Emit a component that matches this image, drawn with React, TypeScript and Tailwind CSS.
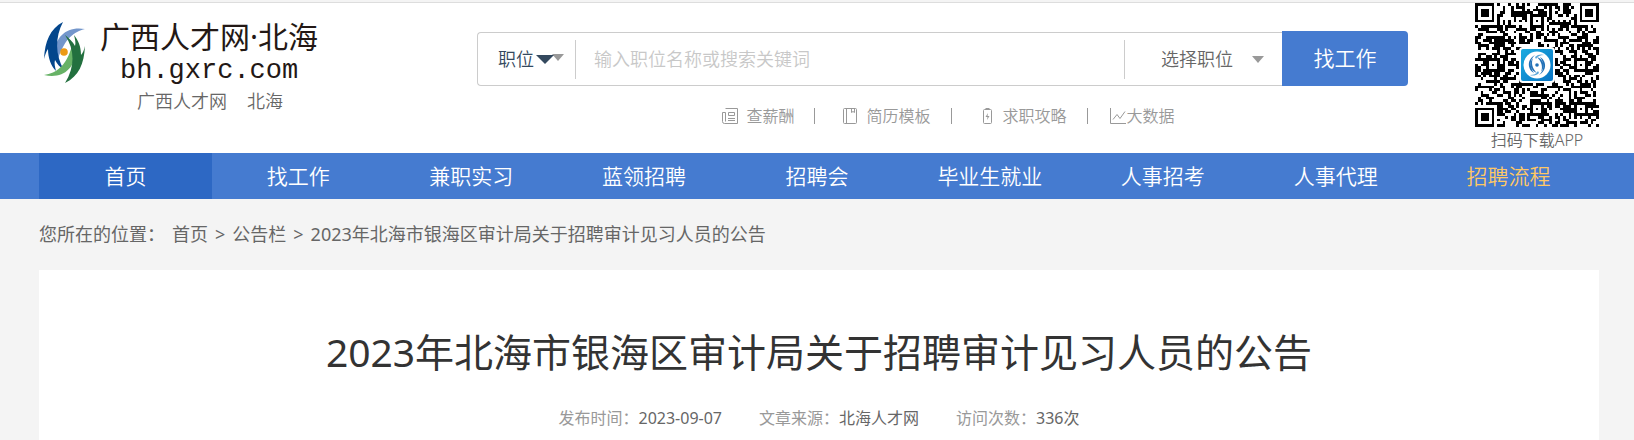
import type { ReactNode } from "react";

type QuickLink = {
  label: string;
  icon: ReactNode;
  tight?: boolean;
};

const navItems = [
  "首页",
  "找工作",
  "兼职实习",
  "蓝领招聘",
  "招聘会",
  "毕业生就业",
  "人事招考",
  "人事代理",
  "招聘流程",
];

const articleTitle = "2023年北海市银海区审计局关于招聘审计见习人员的公告";

const meta = [
  { label: "发布时间：", value: "2023-09-07" },
  { label: "文章来源：", value: "北海人才网" },
  { label: "访问次数：", value: "336次" },
];

const quickLinks: QuickLink[] = [
  {
    label: "查薪酬",
    icon: (
      <svg viewBox="0 0 16 18" className="h-[18px] w-4" fill="none" stroke="currentColor">
        <path d="M3.500 1.500h12v15h-13a2 2 0 0 1-2-2v-9h3v9" />
        <path d="M6.500 5.500h6v3h-6zM6 11.500h7M6 13.500h7" />
      </svg>
    ),
  },
  {
    label: "简历模板",
    icon: (
      <svg viewBox="0 0 16 18" className="h-[18px] w-4" fill="none" stroke="currentColor">
        <path d="M2.500 1.500h11a1 1 0 0 1 1 1v13a1 1 0 0 1-1 1h-11a1 1 0 0 1-1-1v-13a1 1 0 0 1 1-1zM4.500 1.500v15" />
        <path d="M9.500 1.500v4l1.500-1 1.500 1v-4" />
      </svg>
    ),
  },
  {
    label: "求职攻略",
    icon: (
      <svg viewBox="0 0 16 18" className="h-[18px] w-4" fill="none" stroke="currentColor">
        <path d="M5.500 2.500h6a1 1 0 0 1 1 1v12a1 1 0 0 1-1 1h-6a1 1 0 0 1-1-1v-12a1 1 0 0 1 1-1zM6.500 1.500h4" />
        <path d="M9 6 6.500 10H8.500L8 13 10.500 9H8.500z" fill="currentColor" stroke="none" />
      </svg>
    ),
  },
  {
    label: "大数据",
    tight: true,
    icon: (
      <svg viewBox="0 0 16 18" className="h-[18px] w-4" fill="none" stroke="currentColor">
        <path d="M.5 1v15.500h15.500" />
        <path d="m3 12.500 4-5 3 4 5-7" />
      </svg>
    ),
  },
];

const QR_SIZE = 45;
const ALIGNMENT = [6, 22, 38];

function ring(dx: number, dy: number) {
  return Math.max(Math.abs(dx), Math.abs(dy));
}

function isDark(x: number, y: number) {
  const finders = [
    [3, 3],
    [QR_SIZE - 4, 3],
    [3, QR_SIZE - 4],
  ];
  for (const [cx, cy] of finders) {
    const r = ring(x - cx, y - cy);
    if (r <= 4) return r <= 1 || r === 3;
  }
  for (const cx of ALIGNMENT) {
    for (const cy of ALIGNMENT) {
      const r = ring(x - cx, y - cy);
      if (r <= 2) return r !== 1;
    }
  }
  if (x === 6 || y === 6) return (x + y) % 2 === 0;
  const n = Math.sin(x * 12.9898 + y * 78.233) * 43758.5453;
  return n - Math.floor(n) < 0.52;
}

const qrPath = Array.from({ length: QR_SIZE * QR_SIZE }, (_, i) => [i % QR_SIZE, Math.floor(i / QR_SIZE)])
  .filter(([x, y]) => isDark(x, y))
  .map(([x, y]) => `M${x} ${y}h1v1h-1z`)
  .join("");

function QrCode() {
  return (
    <svg viewBox="0 0 124 124" className="block size-[124px]" role="img" aria-label="扫码下载APP">
      <defs>
        <linearGradient id="appTile" x1="0" y1="0" x2="1" y2="1">
          <stop offset="0" stopColor="#1cabdf" />
          <stop offset="1" stopColor="#0874c4" />
        </linearGradient>
      </defs>
      <path d={qrPath} transform="scale(2.7556)" shapeRendering="crispEdges" fill="#000" />
      <rect x="44" y="44" width="36" height="36" rx="4" fill="#fff" />
      <rect x="46" y="46" width="32" height="32" rx="2" fill="url(#appTile)" />
      <circle cx="62" cy="62" r="13.500" fill="#fff" />
      <g fill="#2372b8">
        <path d="M60 52c-5 4-6 11-1 18-6-3-8-13 1-18z" />
        <path d="M58 55c-2 5-1 10 4 15-6-2-9-9-4-15z" />
        <path d="M64 72c5-4 6-11 1-18 6 3 8 13-1 18z" />
        <path d="M66 69c2-5 1-10-4-15 6 2 9 9 4 15z" />
        <circle cx="62" cy="62" r="1.800" />
      </g>
      <path d="M60 54c3-3 7-3 9-2-4 0-6 1-8 4zM64 70c-3 3-7 3-9 2 4 0 6-1 8-4z" fill="#58a5d8" />
    </svg>
  );
}

function LogoMark() {
  return (
    <svg viewBox="0 0 44 64" className="h-16 w-11 shrink-0" aria-hidden="true">
      <path d="M11 32C13 15 24 5 42 8 31 11 22 17 15 38z" fill="#7396cb" />
      <path d="M20 1C7 8 2 20 1 38c1-4 2-7 4-10 0 9 3 17 8 22-1-4-2-8-1-11 2 4 5 7 9 10C12 34 12 16 20 1z" fill="#03468c" />
      <path d="M33 31C31 48 20 58 1 54 14 52 23 45 29 25z" fill="#67b266" />
      <path d="M22 62C36 55 41 43 42 25c-1 4-2 7-4 9 0-9-3-15-7-20 1 4 2 8 1 11-2-4-6-8-10-11 10 15 10 32 0 48z" fill="#23703f" />
      <circle cx="21" cy="31" r="3.800" fill="#ec9a14" />
    </svg>
  );
}

function Logo() {
  return (
    <div className="w-[438px] shrink-0 pt-4">
      <a href="#" className="flex items-center gap-[13px] pl-1 text-[#231815]">
        <LogoMark />
        <span className="flex flex-col font-normal">
          <span className="text-[30px] leading-9">广西人才网·北海</span>
          <span className="pl-5 font-['Liberation_Mono','Noto_Sans_CJK_SC',monospace] text-[27px] leading-8">
            bh.gxrc.com
          </span>
        </span>
      </a>
      <div className="flex gap-5 pl-[98px] text-lg leading-7 text-[#666]">
        <a href="#">广西人才网</a>
        <a href="#">北海</a>
      </div>
    </div>
  );
}

function SearchForm() {
  return (
    <form className="flex h-[55px]" onSubmit={(e) => e.preventDefault()}>
      <div className="mt-px flex min-w-0 flex-1 items-center rounded-l-[4px] border border-r-0 border-[#ccc] bg-white text-lg">
        <button type="button" className="flex h-[39px] w-[98px] items-center gap-0.5 border-r border-[#ccc] pl-5 text-[#34495e]">
          职位
          <svg viewBox="0 0 28 10" className="h-2.5 w-7" aria-hidden="true">
            <path d="M16 0h12l-6 7z" fill="#999" />
            <path d="M0 1h18l-9 9z" fill="#34495e" />
          </svg>
        </button>
        <input
          type="text"
          aria-label="关键词"
          placeholder="输入职位名称或搜索关键词"
          className="min-w-0 flex-1 px-[18px] text-[#666] outline-none placeholder:text-[#c8c8c8]"
        />
        <button type="button" className="flex h-[39px] w-[158px] items-center justify-between border-l border-[#ccc] pr-[18px] pl-9 text-[#666]">
          选择职位
          <svg viewBox="0 0 12 7" className="h-[7px] w-3" aria-hidden="true">
            <path d="M0 0h12l-6 7z" fill="#999" />
          </svg>
        </button>
      </div>
      <button type="submit" className="w-[126px] rounded-r-[4px] bg-[#457bd0] text-[21px] text-white">
        找工作
      </button>
    </form>
  );
}

function QuickLinks() {
  return (
    <ul className="mt-[18px] flex justify-center pl-3 text-base leading-6 text-[#999]">
      {quickLinks.map((link, index) => (
        <li key={link.label} className="flex items-center">
          {index > 0 && (
            <span className={`ml-5 h-4 w-px bg-[#999] ${link.tight ? "mr-[22px]" : "mr-[27px]"}`} />
          )}
          <a href="#" className={`flex items-center ${link.tight ? "gap-px" : "gap-2"}`}>
            {link.icon}
            {link.label}
          </a>
        </li>
      ))}
    </ul>
  );
}

export default function App() {
  return (
    <div className="min-h-screen bg-[#f4f4f4] font-['Noto_Sans','Noto_Sans_CJK_SC',sans-serif] font-[350] text-[#333]">
      <header className="border-t-2 border-[#f4f4f4] bg-white">
        <div className="flex h-[151px] border-t border-[#ddd] pr-[35px] pl-[39px]">
          <Logo />
          <div className="mr-[67px] min-w-0 flex-1 pt-7">
            <SearchForm />
            <QuickLinks />
          </div>
          <div className="shrink-0 text-center text-base leading-[26px] text-[#666]">
            <QrCode />
            扫码下载APP
          </div>
        </div>
      </header>

      <nav className="bg-[#457bd0] px-[39px]">
        <div className="grid grid-cols-9 text-center text-[21px] leading-[46px] text-white">
          {navItems.map((item, index) => (
            <a
              key={item}
              href="#"
              className={index === 0 ? "bg-[#2d68c4]" : index === navItems.length - 1 ? "text-[#ffc865]" : ""}
            >
              {item}
            </a>
          ))}
        </div>
      </nav>

      <main className="pr-[35px] pl-[39px]">
        <nav aria-label="您所在的位置" className="flex h-[71px] items-center gap-[7px] pb-0.5 text-lg font-normal text-[#666]">
          <span>您所在的位置：</span>
          <a href="#">首页</a>
          <span>&gt;</span>
          <a href="#">公告栏</a>
          <span>&gt;</span>
          <span>{articleTitle}</span>
        </nav>

        <article className="bg-white pt-[52px] pb-2.5 text-center font-normal">
          <h1 className="text-[39px] leading-[60px]">{articleTitle}</h1>
          <dl className="mt-6 flex justify-center gap-[37px] text-base leading-6">
            {meta.map((item) => (
              <div key={item.label} className="flex">
                <dt className="text-[#999]">{item.label}</dt>
                <dd className="text-[#666]">{item.value}</dd>
              </div>
            ))}
          </dl>
        </article>
      </main>
    </div>
  );
}
